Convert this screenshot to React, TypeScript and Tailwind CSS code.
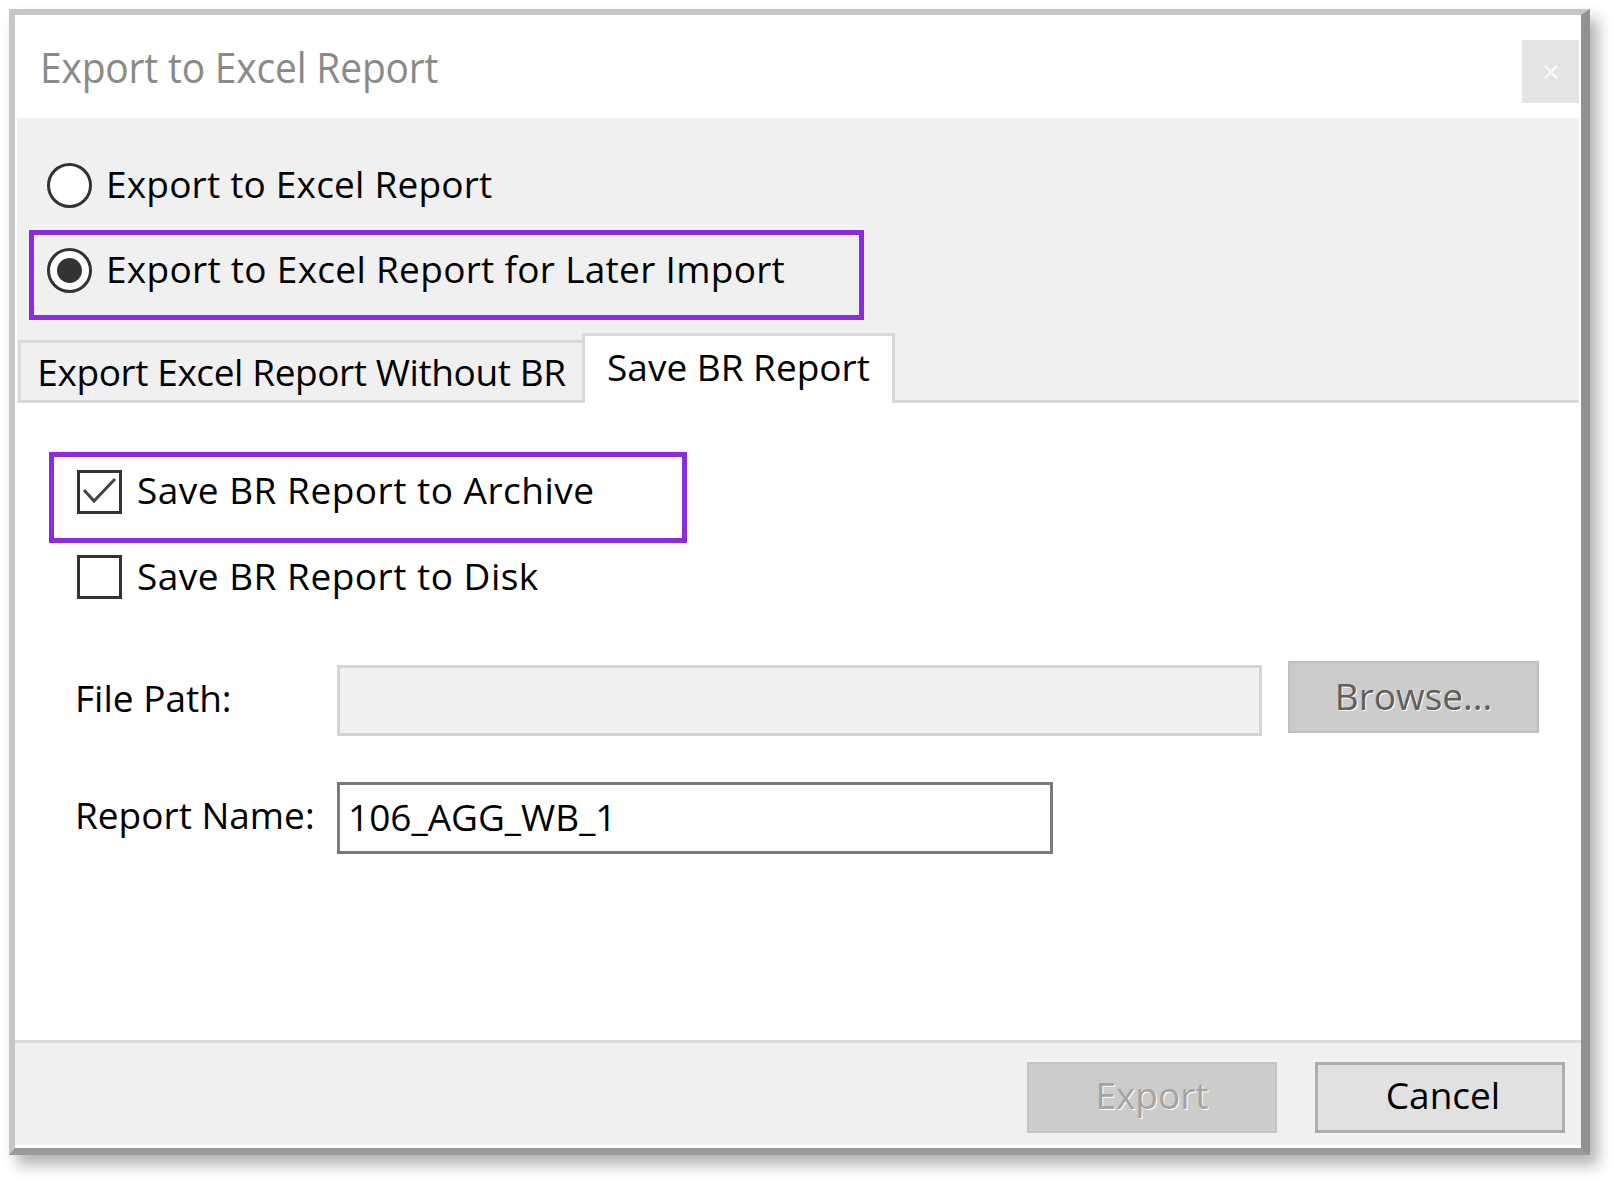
import { useState } from "react";

function Radio({ checked }: { checked: boolean }) {
  return (
    <span className="flex h-[45px] w-[45px] shrink-0 items-center justify-center rounded-full border-[3px] border-[#333333] bg-white">
      {checked && <span className="h-[25px] w-[25px] rounded-full bg-[#333333]" />}
    </span>
  );
}

function CheckBox({ checked }: { checked: boolean }) {
  return (
    <span className="flex h-[44px] w-[45px] shrink-0 items-center justify-center border-[3px] border-[#333333] bg-white">
      {checked && (
        <svg width="39" height="38" viewBox="0 0 39 38" fill="none">
          <path d="M4 17 L14 28 L35 6" stroke="#444444" strokeWidth="3" />
        </svg>
      )}
    </span>
  );
}

export default function App() {
  const [mode, setMode] = useState("later");
  const [archive, setArchive] = useState(true);
  const [disk, setDisk] = useState(false);

  return (
    <div className="min-h-screen bg-white pl-[9px] pt-[9px] font-['Open_Sans',sans-serif] text-[37px] leading-none text-black">
      <div className="flex h-[1146px] w-[1581px] flex-col border-b-[7px] border-l-[6px] border-r-[9px] border-t-[6px] border-b-[#9a9a9a] border-l-[#c6c6c6] border-r-[#919191] border-t-[#c6c6c6] bg-white shadow-[8px_10px_14px_rgba(0,0,0,0.3)]">
        {/* title bar */}
        <div className="flex h-[103px] shrink-0 items-start justify-between">
          <div className="origin-top-left scale-y-110 pl-[25px] pt-[27px] text-[39px] tracking-[-0.2px] text-[#8a8a8a]">
            Export to Excel Report
          </div>
          <button className="mr-[2px] mt-[25px] flex h-[63px] w-[57px] items-center justify-center bg-[#e4e4e4]">
            <svg width="16" height="16" viewBox="0 0 16 16">
              <path d="M2 2 L14 14 M14 2 L2 14" stroke="#f7f7f7" strokeWidth="2.5" />
            </svg>
          </button>
        </div>

        {/* options area */}
        <div className="mx-[2px] flex h-[285px] shrink-0 flex-col bg-[#f0f0f0]">
          <label className="ml-[30px] mt-[45px] flex items-center gap-[14px]" onClick={() => setMode("report")}>
            <Radio checked={mode === "report"} />
            <span className="-mt-[4px] tracking-[0.2px]">Export to Excel Report</span>
          </label>
          <div className="ml-[12px] mt-[22px] h-[90px] w-[835px] border-[5px] border-[#8a2be2] pl-[13px] pt-[13px]">
            <label className="flex items-center gap-[14px]" onClick={() => setMode("later")}>
              <Radio checked={mode === "later"} />
              <span className="-mt-[4px] tracking-[0.3px]">Export to Excel Report for Later Import</span>
            </label>
          </div>
          <div className="mt-auto flex items-end">
            <div className="ml-[1px] flex h-[63px] w-[564px] items-center justify-center border-[3px] border-r-0 border-[#d9d9d9] bg-[#f0f0f0] pb-[1px] tracking-[-0.4px]">
              Export Excel Report Without BR
            </div>
            <div className="flex h-[70px] w-[313px] items-center justify-center border-[3px] border-b-0 border-[#d9d9d9] bg-white pb-[7px]">
              Save BR Report
            </div>
            <div className="h-[3px] flex-1 bg-[#d9d9d9]" />
          </div>
        </div>

        {/* tab panel */}
        <div className="flex flex-1 flex-col">
          <div className="ml-[34px] mt-[49px] h-[91px] w-[638px] border-[5px] border-[#8a2be2] pl-[23px] pt-[13px]">
            <label className="flex items-center gap-[15px]" onClick={() => setArchive(!archive)}>
              <CheckBox checked={archive} />
              <span className="-mt-[5px] tracking-[0.5px]">Save BR Report to Archive</span>
            </label>
          </div>
          <label className="ml-[62px] mt-[12px] flex items-center gap-[15px]" onClick={() => setDisk(!disk)}>
            <CheckBox checked={disk} />
            <span className="-mt-[4px] tracking-[0.5px]">Save BR Report to Disk</span>
          </label>

          <div className="mt-[62px] flex items-start">
            <span className="ml-[60px] mt-[18px] w-[262px]">File Path:</span>
            <div className="mt-[4px] h-[71px] w-[925px] border-[3px] border-[#d4d4d4] bg-[#f0f0f0]" />
            <button className="ml-[26px] h-[72px] w-[251px] border-[2px] border-[#bfbfbf] bg-[#cccccc] pb-[4px] text-[#5f5f5f] [text-shadow:1px_1px_0_#ffffff]">
              Browse...
            </button>
          </div>

          <div className="mt-[46px] flex items-start">
            <span className="ml-[60px] mt-[14px] w-[262px]">Report Name:</span>
            <div className="flex h-[72px] w-[716px] items-center border-[3px] border-[#7a7a7a] bg-white pb-[3px] pl-[8px]">
              106_AGG_WB_1
            </div>
          </div>
        </div>

        {/* footer */}
        <div className="mb-[3px] flex h-[105px] shrink-0 items-start justify-end gap-[38px] border-t-[3px] border-[#dcdcdc] bg-[#f0f0f0] pr-[16px] pt-[19px]">
          <button className="h-[71px] w-[250px] border-[2px] border-[#c4c4c4] bg-[#cccccc] pb-[6px] text-[#a3a3a3] [text-shadow:1px_1px_0_#ffffff]">
            Export
          </button>
          <button className="h-[71px] w-[250px] border-[3px] border-[#adadad] bg-[#e1e1e1] pb-[6px] pl-[6px]">Cancel</button>
        </div>
      </div>
    </div>
  );
}
